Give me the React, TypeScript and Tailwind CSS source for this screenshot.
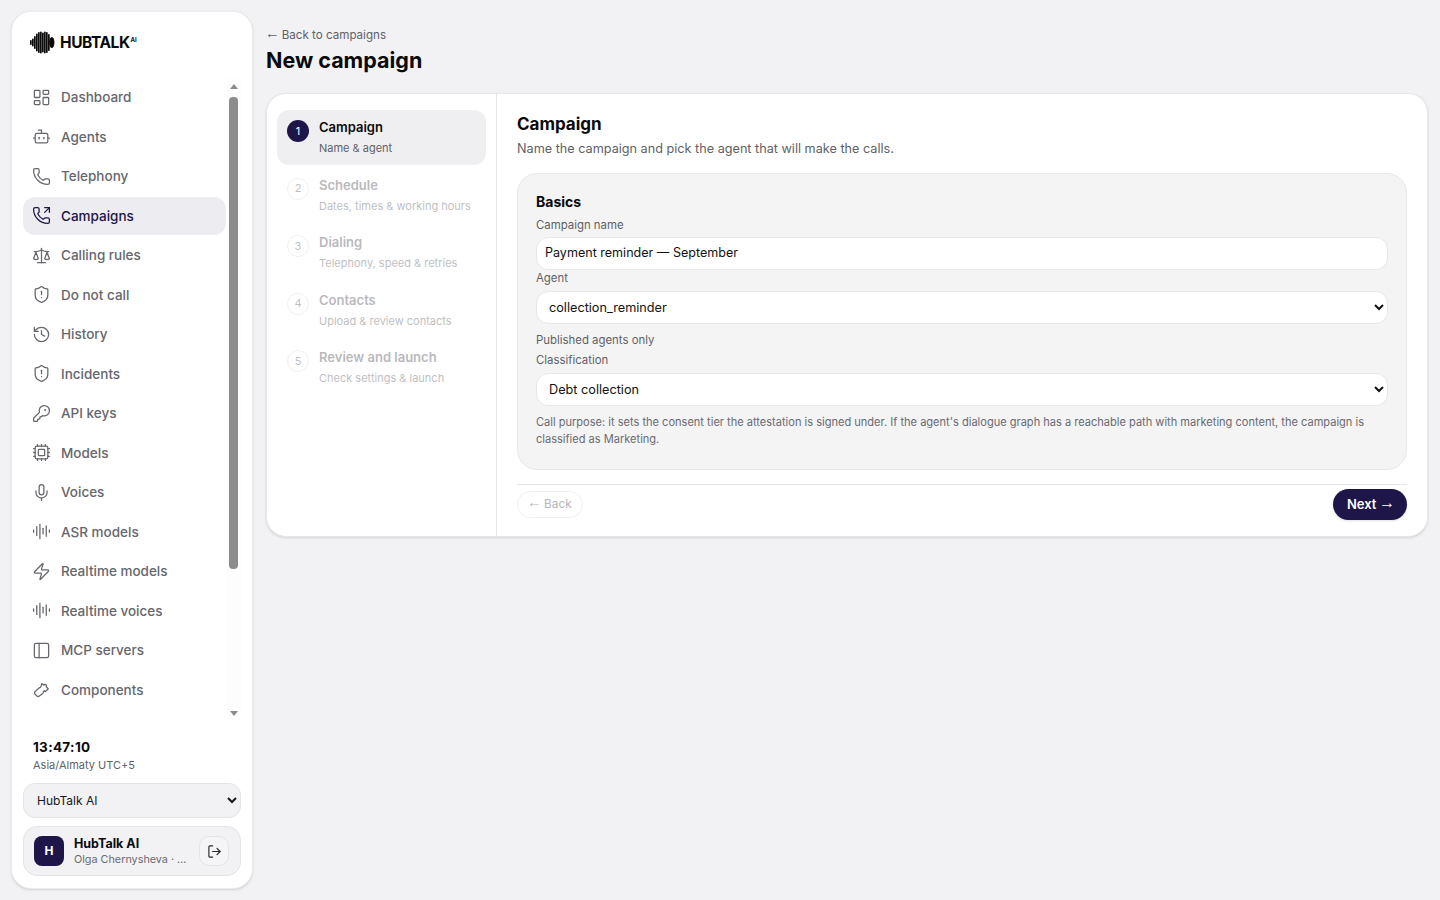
import {
  AudioLines,
  Bot,
  Cpu,
  History,
  KeyRound,
  LayoutDashboard,
  LogOut,
  Mic,
  PanelLeft,
  Phone,
  PhoneOutgoing,
  Scale,
  ShieldAlert,
  Zap,
} from "lucide-react"

function ComponentsIcon({ size = 19, strokeWidth = 1.6 }: { size?: number; strokeWidth?: number }) {
  return (
    <svg width={size} height={size} viewBox="0 0 24 24" fill="none" stroke="currentColor" strokeWidth={strokeWidth} strokeLinecap="round" strokeLinejoin="round">
      <path d="M12.5 4.5 15 6.5C16 4.5 19.5 6 18 8.5L20.5 11 17 14.5 15.5 13.5C14 15 14.5 16 13.5 17L9 20.5C8 21 7 21 6 20L4 18C3 17 3 16 3.5 15L8.5 10.5C9.5 9.5 10 10 11 9Z" />
    </svg>
  )
}

const navItems = [
  { label: "Dashboard", icon: LayoutDashboard },
  { label: "Agents", icon: Bot },
  { label: "Telephony", icon: Phone },
  { label: "Campaigns", icon: PhoneOutgoing, active: true },
  { label: "Calling rules", icon: Scale },
  { label: "Do not call", icon: ShieldAlert },
  { label: "History", icon: History },
  { label: "Incidents", icon: ShieldAlert },
  { label: "API keys", icon: KeyRound },
  { label: "Models", icon: Cpu },
  { label: "Voices", icon: Mic },
  { label: "ASR models", icon: AudioLines },
  { label: "Realtime models", icon: Zap },
  { label: "Realtime voices", icon: AudioLines },
  { label: "MCP servers", icon: PanelLeft },
  { label: "Components", icon: ComponentsIcon },
]

const steps = [
  { n: 1, title: "Campaign", sub: "Name & agent", active: true },
  { n: 2, title: "Schedule", sub: "Dates, times & working hours" },
  { n: 3, title: "Dialing", sub: "Telephony, speed & retries" },
  { n: 4, title: "Contacts", sub: "Upload & review contacts" },
  { n: 5, title: "Review and launch", sub: "Check settings & launch" },
]

function Arrow({ children }: { children: React.ReactNode }) {
  return <span className="-mx-[1px] align-[1px] font-['Liberation_Sans',sans-serif] text-[1.25em] leading-none">{children}</span>
}

function Logo() {
  const bars = [5, 8, 13, 18, 21, 22, 20, 22, 21, 17]
  return (
    <div className="flex items-center gap-[5px]">
      <svg width="25" height="23" viewBox="0 0 25 23">
        {bars.map((h, i) => (
          <rect key={i} x={i * 2} y={11.5 - h / 2} width="1.7" height={h} rx="0.8" fill="#0a0a0a" />
        ))}
        <ellipse cx="21.8" cy="11.5" rx="2.6" ry="5.6" fill="#0a0a0a" />
      </svg>
      <span className="mt-[1px] text-[15.5px] font-bold tracking-[-0.45px] text-[#0a0a0a]">HUBTALK</span>
      <span className="-ml-[4px] -mt-[6px] text-[6px] font-bold text-[#0a0a0a]">AI</span>
    </div>
  )
}

function FakeScrollbar() {
  return (
    <div className="ml-[1px] flex w-[14px] shrink-0 flex-col items-center bg-[#fdfdfd] pt-[6px] pb-[3px] pr-[1px]">
      <div className="h-0 w-0 border-x-[4.5px] border-b-[5px] border-x-transparent border-b-[#8c8c8c]" />
      <div className="mt-[8px] h-[472px] w-[9px] rounded-[4px] bg-[#8c8c8c]" />
      <div className="mt-auto h-0 w-0 border-x-[4.5px] border-t-[5px] border-x-transparent border-t-[#8c8c8c]" />
    </div>
  )
}

function Sidebar() {
  return (
    <aside className="flex h-[878px] w-[242px] shrink-0 flex-col rounded-[20px] border border-[#ebebee] bg-white shadow-sm">
      <div className="flex h-[66px] shrink-0 items-center pb-[6px] pl-[18px]">
        <Logo />
      </div>
      <div className="ml-[11px] flex h-[641px] shrink-0">
        <ul className="flex w-[203px] flex-col gap-[2px] overflow-hidden pt-[0.5px]">
          {navItems.map((item) => (
            <li
              key={item.label}
              className={
                item.active
                  ? "flex h-[37.5px] shrink-0 items-center gap-[10px] rounded-[12px] bg-[#ededf1] pl-[9px] text-[13.5px] font-medium text-[#1e1548]"
                  : "flex h-[37.5px] shrink-0 items-center gap-[10px] rounded-[12px] pl-[9px] text-[13.5px] font-medium text-[#66666d]"
              }
            >
              <item.icon size={19} strokeWidth={1.6} />
              {item.label}
            </li>
          ))}
        </ul>
        <FakeScrollbar />
      </div>
      <div className="flex flex-1 flex-col px-[11px]">
        <div className="mt-[19px] pl-[10px] text-[13.5px] font-bold leading-[18px] tracking-[0.3px] text-[#0a0a0a]">13:47:10</div>
        <div className="pl-[10px] text-[11px] leading-[18px] text-[#5f5f66]">Asia/Almaty UTC+5</div>
        <select className="mt-[9px] h-[35px] w-full rounded-[12px] border border-[#e4e4e8] bg-[#f2f2f4] pl-[9px] text-[12px] text-[#18181b]">
          <option>HubTalk AI</option>
        </select>
        <div className="mt-[8px] flex h-[50px] items-center rounded-[14px] border border-[#e4e4e8] bg-[#f2f2f4] pl-[10px] pr-[11px]">
          <div className="flex h-[30px] w-[30px] shrink-0 items-center justify-center rounded-[8px] bg-[#1e1548] text-[12px] font-bold text-white">
            H
          </div>
          <div className="ml-[10px] flex-1">
            <div className="text-[12.5px] font-bold leading-[16px] text-[#0a0a0a]">HubTalk AI</div>
            <div className="text-[10.8px] leading-[15px] text-[#6a6a72]">Olga Chernysheva · …</div>
          </div>
          <button className="flex h-[30px] w-[30px] shrink-0 items-center justify-center rounded-[10px] border border-[#e4e4e8] bg-[#f5f5f7] text-[#27272a]">
            <LogOut size={15} strokeWidth={1.8} />
          </button>
        </div>
      </div>
    </aside>
  )
}

function Stepper() {
  return (
    <div className="flex w-[230px] shrink-0 flex-col gap-[2.5px] border-r border-[#e7e7ea] px-[10px] py-[16px]">
      {steps.map((s) => (
        <div
          key={s.n}
          className={
            s.active
              ? "flex h-[55px] gap-[10px] rounded-[12px] bg-[#efeff2] pl-[10px] pt-[8px]"
              : "flex h-[55px] gap-[10px] rounded-[12px] pl-[10px] pt-[8px] opacity-40"
          }
        >
          <div
            className={
              s.active
                ? "mt-[2px] flex h-[22px] w-[22px] shrink-0 items-center justify-center rounded-full bg-[#1e1548] text-[11px] text-white"
                : "mt-[2px] flex h-[22px] w-[22px] shrink-0 items-center justify-center rounded-full border border-[#dcdce0] bg-white text-[11px] text-[#5f5f66]"
            }
          >
            {s.n}
          </div>
          <div>
            <div className={s.active ? "text-[13px] font-semibold leading-[18px] text-[#0a0a0a]" : "text-[13px] font-semibold leading-[18px] text-[#52525b]"}>
              {s.title}
            </div>
            <div className="mt-[4px] text-[11px] leading-[16px] text-[#5f5f66]">{s.sub}</div>
          </div>
        </div>
      ))}
    </div>
  )
}

function FieldLabel({ children }: { children: React.ReactNode }) {
  return <div className="text-[11.4px] leading-[16px] text-[#5f5f66]">{children}</div>
}

function Basics() {
  return (
    <section className="mt-[15px] h-[297px] rounded-[20px] border border-[#e7e7ea] bg-[#f4f4f5] px-[18px] pt-[19px]">
      <h3 className="text-[14px] font-bold leading-[18px] text-[#0a0a0a]">Basics</h3>
      <div className="mt-[6px]">
        <FieldLabel>Campaign name</FieldLabel>
      </div>
      <input
        readOnly
        value="Payment reminder — September"
        className="mt-[4px] block h-[33px] w-full rounded-[12px] border border-[#e7e7ea] bg-white px-[8px] pb-[2px] text-[12.55px] text-[#111]"
      />
      <FieldLabel>Agent</FieldLabel>
      <select className="mt-[5px] block h-[33px] w-full rounded-[12px] border border-[#e7e7ea] bg-white px-[8px] text-[12.7px] text-[#111]">
        <option>collection_reminder</option>
      </select>
      <div className="mt-[8px]">
        <FieldLabel>Published agents only</FieldLabel>
      </div>
      <div className="mt-[4px]">
        <FieldLabel>Classification</FieldLabel>
      </div>
      <select className="mt-[5px] block h-[33px] w-full rounded-[12px] border border-[#e7e7ea] bg-white px-[8px] text-[12.7px] text-[#111]">
        <option>Debt collection</option>
      </select>
      <p className="mt-[8px] text-[11.05px] leading-[17px] text-[#6a6a72]">
        Call purpose: it sets the consent tier the attestation is signed under. If the agent's dialogue graph has a reachable path with marketing content, the campaign is classified as Marketing.
      </p>
    </section>
  )
}

export default function App() {
  return (
    <div className="flex h-[900px] w-[1440px] overflow-hidden bg-[#f2f2f4] p-[11px] font-['Inter',sans-serif]">
      <Sidebar />
      <main className="ml-[13px] flex flex-1 flex-col pr-[1px]">
        <div className="mt-[15px] h-[17px] text-[11.6px] leading-[16px] text-[#5f5f66]">
          <Arrow>←</Arrow> Back to campaigns
        </div>
        <h1 className="text-[21.5px] font-bold leading-[34px] text-[#0a0a0a]">New campaign</h1>
        <div className="mt-[16px] flex h-[444px] rounded-[20px] border border-[#e7e7ea] bg-white shadow-sm">
          <Stepper />
          <div className="flex flex-1 flex-col px-[20px] pt-[20px]">
            <h2 className="text-[17px] font-bold leading-[20px] text-[#0a0a0a]">Campaign</h2>
            <p className="mt-[6px] text-[12.67px] leading-[18px] text-[#5f5f66]">Name the campaign and pick the agent that will make the calls.</p>
            <Basics />
            <div className="mt-[14px] flex items-center justify-between border-t border-[#e7e7ea] pt-[4px]">
              <button className="h-[27px] rounded-full border border-[#f0f0f2] px-[10px] text-[11.8px] text-[#b5b5ba]">
                <Arrow>←</Arrow> Back
              </button>
              <button className="h-[31px] w-[74px] rounded-full bg-[#1e1548] pl-[1px] text-[13px] font-semibold text-white shadow-sm">
                Next <Arrow>→</Arrow>
              </button>
            </div>
          </div>
        </div>
      </main>
    </div>
  )
}
